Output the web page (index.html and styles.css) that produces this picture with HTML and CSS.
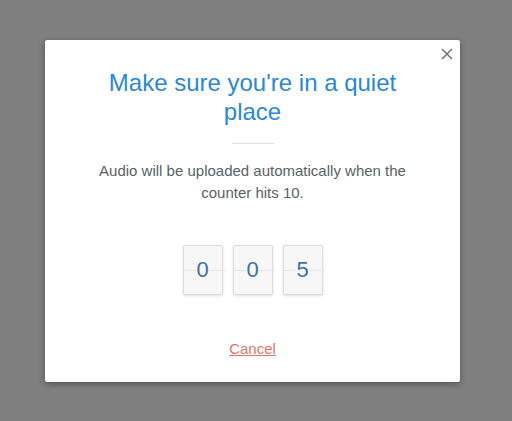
FILE: index.html
```html
<!DOCTYPE html>
<html lang="en">
<head>
	<meta charset="UTF-8">
	<title>Quiet place</title>
	<link rel="stylesheet" href="styles.css">
</head>
<body>
	<div class="overlay">
		<div class="modal">
			<a href="javascript:;" class="close">
				<svg width="12" height="12" viewBox="0 0 12 12"><path d="M1 1L11 11M11 1L1 11" stroke="#6f7780" stroke-width="1.6" fill="none"/></svg>
			</a>
			<h1 class="title">Make sure you're in a quiet place</h1>
			<div class="divider"></div>
			<p class="desc">Audio will be uploaded automatically when the counter hits 10.</p>
			<div class="counter">
				<span class="digit"><span>0</span></span>
				<span class="digit"><span>0</span></span>
				<span class="digit"><span>5</span></span>
			</div>
			<a href="javascript:;" class="cancel">Cancel</a>
		</div>
	</div>
</body>
</html>
```

FILE: styles.css
```css
*{margin:0;padding:0;box-sizing:border-box;}
html,body{height:100%;}
body{background:#7f7f7f;font-family:"Liberation Sans",Arial,sans-serif;}
.overlay{padding:40px 0 0 45px;}
.modal{position:relative;width:415px;height:342px;background:#fff;border-radius:2px;box-shadow:0 2px 6px rgba(0,0,0,.35);padding:28px 50px 0;text-align:center;}
.close{position:absolute;top:8px;right:7px;display:block;width:12px;height:12px;line-height:0;}
.title{font-weight:normal;font-size:24px;line-height:29px;color:#2b88d0;}
.divider{width:42px;height:1px;background:#ddd;margin:17px auto 0;}
.desc{font-size:15px;line-height:22px;color:#595f66;margin:16px -13px 0;}
.counter{display:flex;justify-content:center;gap:10px;margin-top:41px;}
.digit{position:relative;width:40px;height:50px;border:1px solid #dcdcdc;border-radius:2px;background:#f7f7f7;box-shadow:0 1px 3px rgba(0,0,0,.12);font-size:22px;line-height:48px;color:#43719d;}
.digit:before{content:"";position:absolute;left:0;right:-3px;top:50%;height:1px;background:#e6e6e6;}
.digit span{position:relative;background:#f7f7f7;}
.cancel{display:inline-block;margin-top:45px;font-size:15px;color:#d9776b;text-decoration:underline;}
```
